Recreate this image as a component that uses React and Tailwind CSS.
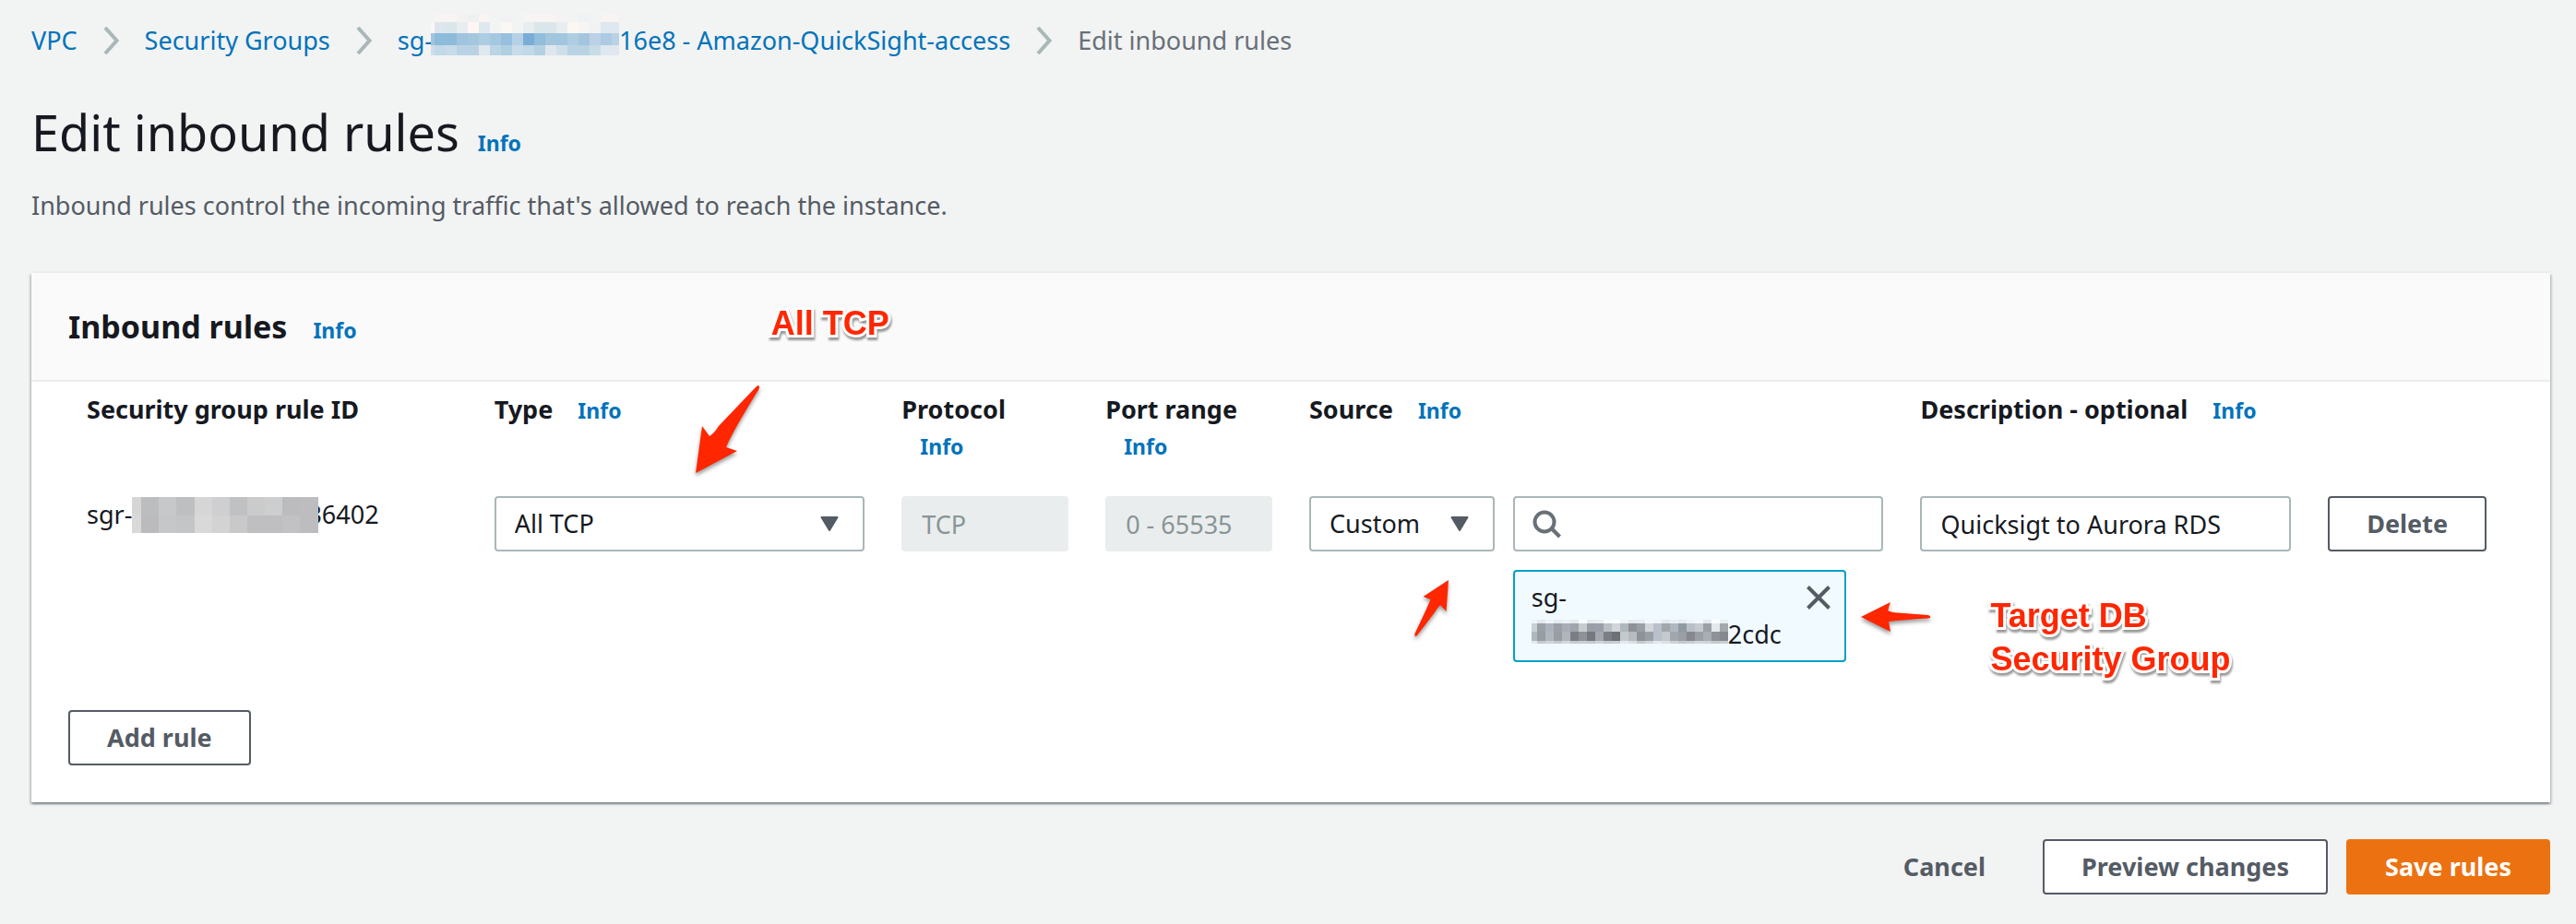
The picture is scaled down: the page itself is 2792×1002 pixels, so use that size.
import React from "react";

const CRUMB_MOSAIC = {
  xs: [0, 4, 16, 28, 40, 52, 64, 76, 88, 100, 112, 124, 136, 148, 160, 172, 184, 196, 204],
  ys: [0, 9, 21, 34, 45],
  rows: [
    "f2f3f3 f7f4f3 f7f4f3 f2f2f2 eff1f1 f7f4f3 f2f3f3 f2f2f2 f2f3f3 f6f4f4 f7f4f3 f7f4f3 f4f3f3 f2f3f3 eff1f4 f2f3f3 f7f4f3 f7f4f3",
    "faf6f4 dce6ec dbe6ea e8edf0 fdf6f2 dfe8ef f2f3f3 fbf7f3 f2f3f3 e8edf0 dbe6ea dbe6ea e8edf0 fbf7f3 f7f5f3 f0f2f3 dfe7ef dfe7ef",
    "a2c4de 8dbbda 8dbbda a0c4de a4c7df adcde2 a5c8e1 98bfdf b6d0e5 79add7 92bddb a3c6df a3c6df afcde2 a3c6de bbd1e5 adcbe2 b9d2e5",
    "cedfe9 c2d9e8 c7dbe8 b9d3e5 b9d3e5 dfe7ef bad5e5 afcfe3 c7dbe8 c0d8e7 b4d1e3 dfe7ee cfdfe9 b9d3e4 b9d3e4 c8dce8 dfe7ef dfe7ef",
  ],
};

const RULE_MOSAIC = {
  xs: [0, 10, 29, 48, 68, 87, 106, 125, 144, 163, 182, 202],
  ys: [0, 20, 39],
  rows: [
    "d6d6d6 bcbdbf c7c8ca bdbfc1 d6d6d6 cfcfd1 bfc1c3 cbcbcb cdcecf bcbcbe bdbdbf",
    "d9d9d9 bbbbbd c6c7c9 c4c5c7 d9d9d9 d3d3d3 c9c9ca bfbfc1 bfbfc1 c2c2c4 bdbdbf",
  ],
};

const TOKEN_MOSAIC = {
  xs: [0, 6, 15, 24, 33, 42, 51, 60, 69, 78, 87, 96, 105, 114, 123, 132, 141, 150, 159, 168, 177, 186, 195, 204, 213],
  ys: [0, 4, 13, 23, 26],
  rows: [
    "eff5fa e3eaee eef4f9 e6edf1 eaf1f6 e3eaee fafdff e4eaee e8eff3 f8fcff fbfdff eef4f9 e3eaee e6edf1 f3f8fc eef4f9 e3eaee eaf1f6 e6edf1 eef4f9 f3f8fc e3eaee fafdff e8eff3",
    "c9d0d6 9b9fa8 adb3bd 9a9fa8 a8adb6 a0a4ad c9cccf 999ea7 9a9fa8 b8c0c4 d2d6da b0b7bf 8e9298 9a9ea6 d2d6da b9c0ca a2a7ad b0b7c0 909aa1 b8c0c8 c4c9ce 9aa0a6 e4e9ec a2a8ab",
    "b0b7bf 989ca3 b0b7bf 9a9ca3 b0b5bd 7a7d84 8e9298 75797f a2a7b0 7b7e85 6d7077 c4c9cd b5bbc0 8e9298 9a9fa6 b9c0ca c4c9ce a2a7ad 9a9fa6 85898f 9a9fa6 a8adb3 8e9298 868a8f",
    "e3eaee c5cace cfd4d8 c5cace d2d7db c5cace c9ced2 c5cace cfd4d8 c5cace c9ced2 e3eaee dbe0e4 c5cace d2d7db e3eaee dbe0e4 cfd4d8 c5cace c9ced2 d2d7db cfd4d8 c5cace c9ced2",
  ],
};

function Mosaic({ data, className }) {
  const { xs, ys, rows } = data;
  const w = xs[xs.length - 1];
  const h = ys[ys.length - 1];
  return (
    <svg
      width={w}
      height={h}
      viewBox={`0 0 ${w} ${h}`}
      shapeRendering="crispEdges"
      role="img"
      aria-label="redacted"
      className={className}
    >
      {rows.map((row, r) =>
        row
          .split(" ")
          .map((c, i) => (
            <rect
              key={`${r}-${i}`}
              x={xs[i]}
              y={ys[r]}
              width={xs[i + 1] - xs[i]}
              height={ys[r + 1] - ys[r]}
              fill={`#${c}`}
            />
          ))
      )}
    </svg>
  );
}

function Info({ className = "" }) {
  return (
    <a href="#info" className={`text-[23px] font-bold text-[#0073bb] ${className}`}>
      Info
    </a>
  );
}

function Chevron() {
  return (
    <svg width="17" height="30" viewBox="0 0 17 30" fill="none" stroke="#aab7b8" strokeWidth="4" aria-hidden="true">
      <path d="M2 1 L14.500 15 L2 29" />
    </svg>
  );
}

function Select({ label, value }) {
  return (
    <div className="relative">
      <select
        aria-label={label}
        defaultValue={value}
        className="block h-15 w-full appearance-none rounded border-2 border-[#aab7b8] bg-white px-5 text-[#16191f]"
      >
        <option>{value}</option>
      </select>
      <svg
        width="20"
        height="16"
        viewBox="0 0 20 16"
        className="pointer-events-none absolute top-[22px] right-7"
        aria-hidden="true"
      >
        <path d="M1.5 1 H18.5 L10 15 Z" fill="#545b64" stroke="#545b64" strokeWidth="2" strokeLinejoin="round" />
      </svg>
    </div>
  );
}

function ReadOnly({ label, value }) {
  return (
    <input
      aria-label={label}
      disabled
      defaultValue={value}
      className="block h-15 w-full rounded bg-[#eaeded] px-[22px] text-[#879596]"
    />
  );
}

function Button({ children, variant = "normal" }) {
  const styles = {
    normal: "border-[#545b64] bg-white text-[#545b64]",
    link: "border-transparent bg-transparent text-[#545b64]",
    primary: "border-[#ec7211] bg-[#ec7211] text-white",
  };
  return (
    <button type="button" className={`h-15 rounded border-2 px-10 font-bold whitespace-nowrap ${styles[variant]}`}>
      {children}
    </button>
  );
}

function Note({ children, className }) {
  return (
    <div
      className={`absolute font-['Liberation_Sans',Arial,sans-serif] text-4xl leading-[47px] font-bold whitespace-nowrap text-[#ff2600] drop-shadow-[1px_3px_1px_rgba(0,0,0,0.4)] [-webkit-text-stroke:6px_white] [paint-order:stroke_fill] [stroke-linejoin:round] ${className}`}
    >
      {children}
    </div>
  );
}

function Arrow({ width, height, d, className }) {
  return (
    <svg
      width={width}
      height={height}
      viewBox={`0 0 ${width} ${height}`}
      aria-hidden="true"
      className={`absolute overflow-visible drop-shadow-[0_3px_2px_rgba(0,0,0,0.4)] ${className}`}
    >
      <path d={d} fill="#ff2600" />
    </svg>
  );
}

export default function App() {
  return (
    <div className="min-h-screen bg-[#f2f3f3] pt-6 pr-7 pb-8 pl-[34px] font-['Noto_Sans','Open_Sans',sans-serif] text-[27px] leading-10 text-[#16191f]">
      <nav aria-label="Breadcrumb">
        <ol className="flex items-center gap-7">
          <li>
            <a href="#vpc" className="text-[#0073bb]">VPC</a>
          </li>
          <Chevron />
          <li>
            <a href="#groups" className="text-[#0073bb]">Security Groups</a>
          </li>
          <Chevron />
          <li>
            <a href="#group" className="text-[#0073bb]">
              sg-
              <Mosaic data={CRUMB_MOSAIC} className="relative -mt-3 mb-0.5 -ml-0.5 inline-block align-text-bottom" />
              16e8 - Amazon-QuickSight-access
            </a>
          </li>
          <Chevron />
          <li className="text-[#687078]">Edit inbound rules</li>
        </ol>
      </nav>

      <header className="mt-[43px]">
        <div className="flex items-baseline gap-5">
          <h1 className="text-[54px] leading-[72px]">Edit inbound rules</h1>
          <Info />
        </div>
        <p className="mt-6 text-[#545b64]">
          Inbound rules control the incoming traffic that's allowed to reach the instance.
        </p>
      </header>

      <section className="mt-[53px] bg-white shadow-[0_-2px_0_#eaeded,0_2px_2px_rgba(0,28,36,0.3),2px_2px_2px_rgba(0,28,36,0.15),-2px_2px_2px_rgba(0,28,36,0.15)]">
        <div className="flex items-baseline gap-7 border-b-2 border-[#eaeded] bg-[#fafafa] px-10 py-[34px]">
          <h2 className="text-[34px] leading-[48px] font-bold">Inbound rules</h2>
          <Info />
        </div>
        <div className="px-10 pb-10">
          <table className="w-full table-fixed text-left">
            <colgroup>
              <col className="w-2/12" />
              <col className="w-2/12" />
              <col className="w-1/12" />
              <col className="w-1/12" />
              <col className="w-3/12" />
              <col className="w-2/12" />
              <col className="w-1/12" />
            </colgroup>
            <thead>
              <tr className="align-top">
                <th className="px-5 pt-2.5">Security group rule ID</th>
                <th className="relative px-5 pt-2.5">
                  Type <Info className="ml-5" />
                  <Note className="-top-[87px] left-80">All TCP</Note>
                  <Arrow
                    width={76}
                    height={104}
                    className="top-0 left-[234px]"
                    d="M4 99 L11 48 L19 59 Q24 56 29 48 L69 6 Q73 2 73 6 Q73 8 70 12 Q44 54 37 71 L49 75 Z"
                  />
                </th>
                <th className="px-5 pt-2.5">
                  Protocol <Info className="ml-5 block" />
                </th>
                <th className="px-5 pt-2.5">
                  Port range <Info className="ml-5 block" />
                </th>
                <th className="px-5 pt-2.5">
                  Source <Info className="ml-5" />
                </th>
                <th className="px-5 pt-2.5 whitespace-nowrap">
                  Description - optional <Info className="ml-5" />
                </th>
                <td />
              </tr>
            </thead>
            <tbody>
              <tr className="align-top">
                <td className="px-5 pt-[34px] whitespace-nowrap">
                  sgr-
                  <Mosaic data={RULE_MOSAIC} className="relative -mt-2 -mr-3 -mb-0.5 inline-block align-text-bottom" />
                  36402
                </td>
                <td className="px-5 pt-[34px]">
                  <Select label="Type" value="All TCP" />
                </td>
                <td className="px-5 pt-[34px]">
                  <ReadOnly label="Protocol" value="TCP" />
                </td>
                <td className="px-5 pt-[34px]">
                  <ReadOnly label="Port range" value="0 - 65535" />
                </td>
                <td className="relative px-5 pt-[34px]">
                  <div className="grid grid-cols-[1fr_2fr] items-start gap-5">
                    <Select label="Source" value="Custom" />
                    <div>
                      <div className="relative">
                        <input
                          type="search"
                          aria-label="Search source"
                          className="block h-15 w-full rounded border-2 border-[#aab7b8] bg-white pr-5 pl-16"
                        />
                        <svg
                          width="32"
                          height="32"
                          viewBox="0 0 32 32"
                          fill="none"
                          stroke="#687078"
                          strokeWidth="4"
                          className="pointer-events-none absolute top-3.5 left-5"
                          aria-hidden="true"
                        >
                          <circle cx="14" cy="14" r="10.500" />
                          <path d="M21.500 21 L30.500 30" />
                        </svg>
                      </div>
                      <div className="mt-5 flex w-[90%] items-start justify-between rounded border-2 border-[#00a1c9] bg-[#f1faff] py-2 pr-[15px] pl-[18px]">
                        <span>
                          <span className="block">sg-</span>
                          <span className="block whitespace-nowrap">
                            <Mosaic data={TOKEN_MOSAIC} className="inline-block align-baseline" />
                            2cdc
                          </span>
                        </span>
                        <button type="button" aria-label="Remove source" className="mt-[7px]">
                          <svg width="26" height="26" viewBox="0 0 26 26" stroke="#545b64" strokeWidth="4" aria-hidden="true">
                            <path d="M1.5 1.5 L24.5 24.5 M24.5 1.5 L1.5 24.5" />
                          </svg>
                        </button>
                      </div>
                    </div>
                  </div>
                  <Arrow
                    width={44}
                    height={68}
                    className="top-[121px] left-[131px]"
                    d="M40 4 L37.500 38 L31 31 Q28 34 25 39 L6 64 Q3 67 3.500 62 Q16 36 20.500 25 L12.500 22 Z"
                  />
                </td>
                <td className="relative px-5 pt-[34px]">
                  <input
                    aria-label="Description - optional"
                    defaultValue="Quicksigt to Aurora RDS"
                    className="block h-15 w-full rounded border-2 border-[#aab7b8] bg-white px-5"
                  />
                  <Arrow
                    width={82}
                    height={40}
                    className="top-[145px] -left-12"
                    d="M4 20 L36 4 L33 13 Q37 15 44 15.500 L77 18 Q80 19 79 21 L77 21.500 Q50 23 34 25 L36 36 Z"
                  />
                  <Note className="top-[140px] left-24">
                    Target DB
                    <br />
                    Security Group
                  </Note>
                </td>
                <td className="pt-[34px] pl-5">
                  <Button>Delete</Button>
                </td>
              </tr>
            </tbody>
          </table>
          <div className="mt-[52px]">
            <Button>Add rule</Button>
          </div>
        </div>
      </section>

      <footer className="mt-10 flex justify-end gap-5">
        <Button variant="link">Cancel</Button>
        <Button>Preview changes</Button>
        <Button variant="primary">Save rules</Button>
      </footer>
    </div>
  );
}
